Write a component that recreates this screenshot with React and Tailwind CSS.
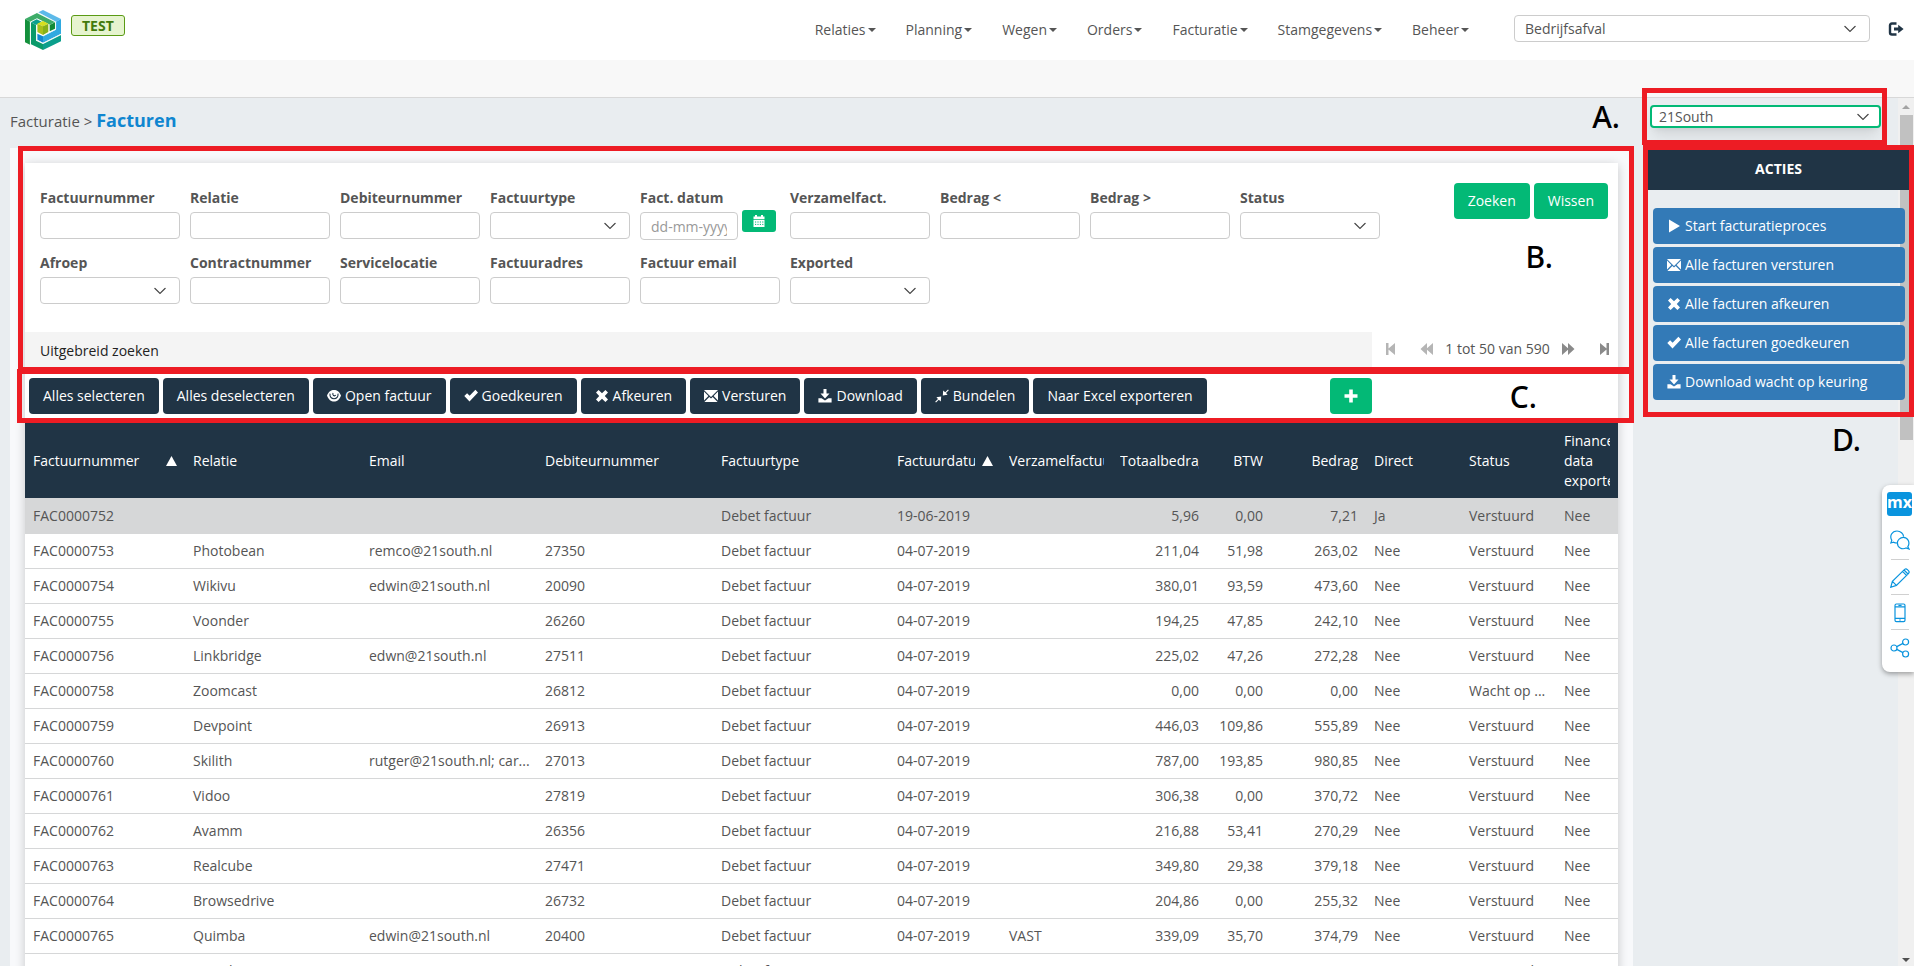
import React, { useState } from 'react';

const menuItems = ['Relaties', 'Planning', 'Wegen', 'Orders', 'Facturatie', 'Stamgegevens', 'Beheer'];

const filters = [
  { id: 'factuurnummer', label: 'Factuurnummer', type: 'text' },
  { id: 'relatie', label: 'Relatie', type: 'text' },
  { id: 'debiteurnummer', label: 'Debiteurnummer', type: 'text' },
  { id: 'factuurtype', label: 'Factuurtype', type: 'select' },
  { id: 'factuurdatum', label: 'Fact. datum', type: 'date' },
  { id: 'verzamelfactuur', label: 'Verzamelfact.', type: 'text' },
  { id: 'bedrag-max', label: 'Bedrag <', type: 'text' },
  { id: 'bedrag-min', label: 'Bedrag >', type: 'text' },
  { id: 'status', label: 'Status', type: 'select' },
  { id: 'afroep', label: 'Afroep', type: 'select' },
  { id: 'contractnummer', label: 'Contractnummer', type: 'text' },
  { id: 'servicelocatie', label: 'Servicelocatie', type: 'text' },
  { id: 'factuuradres', label: 'Factuuradres', type: 'text' },
  { id: 'factuur-email', label: 'Factuur email', type: 'text' },
  { id: 'exported', label: 'Exported', type: 'select' },
];

const toolbar = [
  { label: 'Alles selecteren' },
  { label: 'Alles deselecteren' },
  { label: 'Open factuur', icon: 'eye' },
  { label: 'Goedkeuren', icon: 'ok' },
  { label: 'Afkeuren', icon: 'remove' },
  { label: 'Versturen', icon: 'envelope' },
  { label: 'Download', icon: 'download' },
  { label: 'Bundelen', icon: 'resize' },
  { label: 'Naar Excel exporteren' },
];

const actions = [
  { label: 'Start facturatieproces', icon: 'play' },
  { label: 'Alle facturen versturen', icon: 'envelope' },
  { label: 'Alle facturen afkeuren', icon: 'remove' },
  { label: 'Alle facturen goedkeuren', icon: 'ok' },
  { label: 'Download wacht op keuring', icon: 'download' },
];

const columns = [
  { key: 'nummer', label: 'Factuurnummer', width: 'w-[160px]', sorted: true },
  { key: 'relatie', label: 'Relatie', width: 'w-[176px]' },
  { key: 'email', label: 'Email', width: 'w-[176px]' },
  { key: 'debiteur', label: 'Debiteurnummer', width: 'w-[176px]' },
  { key: 'type', label: 'Factuurtype', width: 'w-[176px]' },
  { key: 'datum', label: 'Factuurdatum', width: 'w-[112px]', sorted: true },
  { key: 'verzamel', label: 'Verzamelfactuur', width: 'w-[111px]' },
  { key: 'totaal', label: 'Totaalbedrag', width: 'w-[95px]', right: true },
  { key: 'btw', label: 'BTW', width: 'w-[64px]', right: true },
  { key: 'bedrag', label: 'Bedrag', width: 'w-[95px]', right: true },
  { key: 'direct', label: 'Direct', width: 'w-[95px]' },
  { key: 'status', label: 'Status', width: 'w-[95px]' },
  { key: 'exported', label: 'Finance data exported', width: 'w-[62px]' },
];

const invoice = (nummer, relatie, email, debiteur, totaal, btw, bedrag, extra = {}) => ({
  nummer,
  relatie,
  email,
  debiteur,
  type: 'Debet factuur',
  datum: '04-07-2019',
  verzamel: '',
  totaal,
  btw,
  bedrag,
  direct: 'Nee',
  status: 'Verstuurd',
  exported: 'Nee',
  ...extra,
});

const invoices = [
  invoice('FAC0000752', '', '', '', '5,96', '0,00', '7,21', { datum: '19-06-2019', direct: 'Ja' }),
  invoice('FAC0000753', 'Photobean', 'remco@21south.nl', '27350', '211,04', '51,98', '263,02'),
  invoice('FAC0000754', 'Wikivu', 'edwin@21south.nl', '20090', '380,01', '93,59', '473,60'),
  invoice('FAC0000755', 'Voonder', '', '26260', '194,25', '47,85', '242,10'),
  invoice('FAC0000756', 'Linkbridge', 'edwn@21south.nl', '27511', '225,02', '47,26', '272,28'),
  invoice('FAC0000758', 'Zoomcast', '', '26812', '0,00', '0,00', '0,00', { status: 'Wacht op ...' }),
  invoice('FAC0000759', 'Devpoint', '', '26913', '446,03', '109,86', '555,89'),
  invoice('FAC0000760', 'Skilith', 'rutger@21south.nl; car...', '27013', '787,00', '193,85', '980,85'),
  invoice('FAC0000761', 'Vidoo', '', '27819', '306,38', '0,00', '370,72'),
  invoice('FAC0000762', 'Avamm', '', '26356', '216,88', '53,41', '270,29'),
  invoice('FAC0000763', 'Realcube', '', '27471', '349,80', '29,38', '379,18'),
  invoice('FAC0000764', 'Browsedrive', '', '26732', '204,86', '0,00', '255,32'),
  invoice('FAC0000765', 'Quimba', 'edwin@21south.nl', '20400', '339,09', '35,70', '374,79', { verzamel: 'VAST' }),
  invoice('FAC0000766', 'Quimba', '', '20400', '120,00', '25,20', '145,20'),
];

const iconPaths = {
  play: 'M2 0.5 L13 7 L2 13.5 Z',
  ok: 'M14 3.4 L11.4 0.8 L5.6 6.8 L3.1 4.3 L0.3 7 L5.5 12.4 Z',
  remove: 'M3.6 1 L7 4.2 L10.4 1 L13 3.6 L9.8 7 L13 10.4 L10.4 13 L7 9.8 L3.6 13 L1 10.4 L4.2 7 L1 3.6 Z',
  envelope: 'M0 1 H14 L7 8 Z M0 2.4 L4.4 7 L0 11.6 Z M14 2.4 L9.6 7 L14 11.6 Z M0.4 13 L5.3 7.9 L7 9.6 L8.7 7.9 L13.6 13 Z',
  download: 'M5.5 0 H8.5 V4.5 H11.5 L7 9.4 L2.5 4.5 H5.5 Z M0.4 9.2 H3.6 L7 11.4 L10.4 9.2 H13.6 V13.6 H0.4 Z',
  resize: 'M13 0.4 L13.8 1.2 L11 4 L12.6 5.8 L7.8 6.4 L8.2 1.6 L10.2 3.2 Z M1 13.6 L0.2 12.8 L3 10 L1.4 8.2 L6.2 7.6 L5.8 12.4 L3.8 10.8 Z',
  plus: 'M5.2 0.5 H8.8 V5.2 H13.5 V8.8 H8.8 V13.5 H5.2 V8.8 H0.5 V5.2 H5.2 Z',
  stepBackward: 'M2 1 H4.5 V6.4 L11 1 V13 L4.5 7.6 V13 H2 Z',
  stepForward: 'M12 1 H9.5 V6.4 L3 1 V13 L9.5 7.6 V13 H12 Z',
  backward: 'M0.5 7 L7 1 V6.2 L13 1 V13 L7 7.8 V13 Z',
  forward: 'M13.5 7 L7 1 V6.2 L1 1 V13 L7 7.8 V13 Z',
};

const Icon = ({ name, className = 'w-[14px] h-[14px]' }) => {
  if (name === 'eye') {
    return (
      <svg viewBox="0 0 14 14" className={className} aria-hidden="true">
        <path d="M0 6.6 C1.6 2.4 4 1 7 1 C10 1 12.4 2.4 14 6.6 C12.4 11 10 12.6 7 12.6 C4 12.6 1.6 11 0 6.6 Z" fill="currentColor" />
        <path d="M3 4.6 C2.6 8 4.4 9.8 7 9.8 C9.6 9.8 11.4 8 11 4.6" fill="none" stroke="#203445" strokeWidth="1.1" />
        <path d="M6 4 C5.2 6.4 7.2 7.6 8.8 6.2" fill="none" stroke="#203445" strokeWidth="1.1" />
      </svg>
    );
  }
  return (
    <svg viewBox="0 0 14 14" className={className} aria-hidden="true">
      <path d={iconPaths[name]} fill="currentColor" />
    </svg>
  );
};

const CalendarIcon = () => (
  <svg viewBox="0 0 12 12" className="w-3 h-3" aria-hidden="true">
    <path d="M0.5 1.4 H2 V0 H4 V1.4 H8 V0 H10 V1.4 H11.5 V4 H0.5 Z M0.5 4.8 H11.5 V12 H0.5 Z" fill="currentColor" />
    <path d="M2 7 H10.4 M2 9.4 H10.4" stroke="#03b976" strokeWidth="1" strokeDasharray="1.2 1.2" />
  </svg>
);

const LogoutIcon = () => (
  <svg viewBox="0 0 16 14" className="w-4 h-[14px]" aria-hidden="true">
    <path d="M8.5 1.5 H4 Q2 1.5 2 3.5 V10.5 Q2 12.5 4 12.5 H8.5" fill="none" stroke="currentColor" strokeWidth="2.4" />
    <path d="M6 5.4 H10.2 V2.8 L15.6 7 L10.2 11.2 V8.6 H6 Z" fill="currentColor" />
  </svg>
);

const Logo = () => (
  <svg viewBox="0 0 108 120" className="w-9 h-10" role="img" aria-label="Logo">
    <polygon points="40,7 54,0 108,27 93,35" fill="#5cb9e9" />
    <polygon points="108,27 108,71 54,98 54,79 93,59 93,35" fill="#2fa9e0" />
    <polygon points="37,71 54,79 54,98 37,89" fill="#1288cf" />
    <polygon points="0,27 36,9 90,36 75,44 36,25 15,35" fill="#3dac68" />
    <polygon points="0,27 15,35 15,104 0,97" fill="#14903c" />
    <polygon points="90,37 90,56 74,64 74,45" fill="#128a36" />
    <polygon points="18,37 33,45 33,92 54,102 54,120 18,103" fill="#0a9a6a" />
    <polygon points="18,37 35,28 50,35 33,45" fill="#0c9f8f" />
    <polygon points="108,75 108,94 54,120 54,102" fill="#0a9f8c" />
    <polygon points="37,41 54,33 70,41 54,49" fill="#d5df20" />
    <polygon points="37,41 54,49 54,75 37,66" fill="#a9c01c" />
    <polygon points="70,41 70,66 54,75 54,49" fill="#87b018" />
    <path d="M16 36 V104 M35 47 V90 L54 100 L108 73 M37 8 L92 36 V58 L54 78" fill="none" stroke="#e8f6f0" strokeWidth="2" />
  </svg>
);

const Chevron = ({ className }) => (
  <svg viewBox="0 0 12 7" className={className} aria-hidden="true">
    <path d="M0.5 0.5 L6 6 L11.5 0.5" fill="none" stroke="#444" strokeWidth="1.1" />
  </svg>
);

const Select = ({ id, options = [''], label, active }) => (
  <div className="relative w-full">
    <select
      id={id}
      aria-label={label}
      className={
        active
          ? 'block w-full h-[23px] px-[7px] appearance-none bg-white border-2 border-[#03b976] rounded text-[#555] shadow-lg outline-none'
          : 'block w-full h-[27px] px-[10px] appearance-none bg-white border border-[#ccc] rounded text-[#555]'
      }
    >
      {options.map((option) => (
        <option key={option}>{option}</option>
      ))}
    </select>
    <Chevron
      className={`absolute top-1/2 -translate-y-1/2 w-3 h-[7px] pointer-events-none ${active ? 'right-3' : 'right-[14px]'}`}
    />
  </div>
);

const Filter = ({ filter }) => (
  <div>
    <label htmlFor={filter.id} className="block mb-1 font-bold text-[#555] whitespace-nowrap">
      {filter.label}
    </label>
    {filter.type === 'select' && <Select id={filter.id} />}
    {filter.type === 'text' && (
      <input id={filter.id} type="text" className="block w-full h-[27px] px-[10px] border border-[#ccc] rounded" />
    )}
    {filter.type === 'date' && (
      <div className="flex gap-1">
        <input
          id={filter.id}
          type="text"
          placeholder="dd-mm-yyyy"
          className="block w-[98px] h-7 px-[10px] border border-[#ccc] rounded placeholder:text-[#999]"
        />
        <button
          type="button"
          aria-label="Kies datum"
          className="flex items-center justify-center w-[34px] h-[22px] -mt-[2px] bg-[#03b976] text-white rounded-[3px]"
        >
          <CalendarIcon />
        </button>
      </div>
    )}
  </div>
);

const Header = () => (
  <header>
    <div className="flex items-center h-[60px] bg-white pl-[25px] pr-[10px]">
      <Logo />
      <span className="mb-[9px] ml-[10px] px-[10px] h-[21px] leading-[19px] bg-[#e6f4cf] border border-[#5a9a14] rounded-[3px] text-[#437a0c] font-bold">
        TEST
      </span>
      <nav className="flex gap-[30px] ml-auto mr-[45px]">
        {menuItems.map((item) => (
          <a key={item} href="#" className="flex items-center gap-[2px] text-[#555]">
            {item}
            <svg viewBox="0 0 8 4" className="w-2 h-1" aria-hidden="true">
              <path d="M0 0 H8 L4 4 Z" fill="currentColor" />
            </svg>
          </a>
        ))}
      </nav>
      <div className="w-[356px] mb-[3px]">
        <Select id="afdeling" label="Afdeling" options={['Bedrijfsafval']} />
      </div>
      <button type="button" aria-label="Uitloggen" className="ml-[18px] mb-[3px] text-[#203445]">
        <LogoutIcon />
      </button>
    </div>
    <div className="h-[38px] bg-[#f8f8f8] border-b border-[#d8d8d8]" />
  </header>
);

const Pager = () => (
  <div className="flex items-center justify-between w-[246px] pl-3 pr-[7px] pb-1 text-[#555]">
    <button type="button" aria-label="Eerste pagina" className="text-[#b5b5b5]"><Icon name="stepBackward" /></button>
    <button type="button" aria-label="Vorige pagina" className="ml-[10px] text-[#b5b5b5]"><Icon name="backward" /></button>
    <span>1 tot 50 van 590</span>
    <button type="button" aria-label="Volgende pagina" className="mr-[10px] text-[#8a8a8a]"><Icon name="forward" /></button>
    <button type="button" aria-label="Laatste pagina" className="text-[#8a8a8a]"><Icon name="stepForward" /></button>
  </div>
);

const InvoiceTable = () => {
  const [selected, setSelected] = useState('FAC0000752');

  return (
    <table className="w-full table-fixed border-separate border-spacing-0">
      <thead>
        <tr className="h-[76px] bg-[#203445] text-white">
          {columns.map((col) => (
            <th
              key={col.key}
              className={`${col.width} px-2 font-normal border-b border-[#d6d7d8] ${col.right ? 'text-right' : 'text-left'}`}
            >
              <div className="flex items-center gap-[7px]">
                <span className="flex-1 min-w-0 overflow-hidden">{col.label}</span>
                {col.sorted && (
                  <svg viewBox="0 0 11 10" className="w-[11px] h-[10px] shrink-0" aria-hidden="true">
                    <path d="M5.5 0 L11 10 H0 Z" fill="currentColor" />
                  </svg>
                )}
              </div>
            </th>
          ))}
        </tr>
      </thead>
      <tbody>
        {invoices.map((row) => (
          <tr
            key={row.nummer}
            onClick={() => setSelected(row.nummer)}
            className={`h-[35px] text-[#555] ${row.nummer === selected ? 'bg-[#d6d7d8]' : 'bg-white'}`}
          >
            {columns.map((col) => (
              <td
                key={col.key}
                className={`border-b border-[#d6d7d8] whitespace-nowrap ${col.right ? 'px-2 text-right' : 'pl-2 text-left'}`}
              >
                {row[col.key]}
              </td>
            ))}
          </tr>
        ))}
      </tbody>
    </table>
  );
};

const Sidebar = () => (
  <aside className="relative z-10 w-[281px] shrink-0 pl-[10px]">
    <div className="h-[50px] pt-[7px] pl-[7px] pr-[33px]">
      <Select id="bedrijf" label="Bedrijf" options={['21South']} active />
    </div>
    <h2 className="h-[42px] leading-[42px] bg-[#203445] text-white text-center font-bold">ACTIES</h2>
    <div className="flex flex-col gap-[3px] pt-[18px] pl-[10px] pr-[9px]">
      {actions.map((action) => (
        <button
          key={action.label}
          type="button"
          className="flex items-center gap-1 h-9 px-[14px] bg-[#337ab7] text-white rounded"
        >
          <Icon name={action.icon} />
          {action.label}
        </button>
      ))}
    </div>
  </aside>
);

const Scrollbar = () => (
  <div className="absolute right-0 inset-y-0 w-4 flex flex-col items-center bg-[#f0f0f0]">
    <svg viewBox="0 0 8 4" className="w-2 h-1 mt-[7px] mb-[6px] shrink-0" aria-hidden="true">
      <path d="M4 0 L8 4 H0 Z" fill="#a3a3a3" />
    </svg>
    <div className="w-[13px] h-[325px] bg-[#c1c1c1]" />
    <svg viewBox="0 0 8 4" className="w-2 h-1 mt-auto mb-1 shrink-0" aria-hidden="true">
      <path d="M0 0 H8 L4 4 Z" fill="#505050" />
    </svg>
  </div>
);

const FeedbackWidget = () => {
  const tool = 'flex justify-center w-[18px] h-[35px] pt-2 border-t border-[#d0d0d0]';
  return (
    <div className="absolute right-0 top-[485px] z-20 w-8 h-[187px] pt-[7px] pl-[3px] flex flex-col items-center bg-white rounded-l-lg shadow-[0_2px_5px_rgba(0,0,0,0.35)]">
      <div className="w-[25px] h-6 leading-[21px] text-center rounded-[3px] bg-[#0a94de] text-white text-base font-bold">mx</div>
      <button type="button" aria-label="Feedback" className="flex justify-center w-[18px] h-[43px] pt-[14px]">
        <svg viewBox="0 0 20 20" className="w-5 h-5 shrink-0" fill="none" stroke="#0a94de" strokeWidth="1.2">
          <path d="M7.4 13 C5.8 13 4.6 12.8 3.6 12.2 L0.8 13 L1.8 10.4 C-0.8 6 2 1 7 1 C10.6 1 13.4 3.6 13.6 6.6" />
          <path d="M17.8 16.8 C20.4 12.8 18 7.4 13.4 7.4 C10 7.4 7.4 10 7.4 13 C7.4 17.6 12 20 16 18 L19 19 Z" />
        </svg>
      </button>
      <button type="button" aria-label="Bewerken" className={tool}>
        <svg viewBox="0 0 20 20" className="w-5 h-5 shrink-0" fill="none" stroke="#0a94de" strokeWidth="1.2">
          <path d="M0.8 19.2 L2.4 13.4 L14.6 1.4 Q16 0.2 17.4 1.6 L18.6 2.8 Q19.8 4.2 18.4 5.6 L6.4 17.4 Z M2.4 13.4 L6.4 17.4 M12.6 3.4 L16.4 7.4 M14 2 L18 6" />
        </svg>
      </button>
      <button type="button" aria-label="Mobiel" className={tool}>
        <svg viewBox="0 0 12 20" className="w-3 h-5 shrink-0" fill="none" stroke="#0a94de" strokeWidth="1.2">
          <rect x="1" y="1" width="10" height="17.6" rx="1.4" />
          <path d="M1 3.8 H11 M1 15.4 H11 M4.4 2.4 H7.6 M5.2 17 H6.8" />
        </svg>
      </button>
      <button type="button" aria-label="Delen" className={tool}>
        <svg viewBox="0 0 20 20" className="w-5 h-5 shrink-0" fill="none" stroke="#0a94de" strokeWidth="1.2">
          <circle cx="4" cy="10" r="3" />
          <circle cx="15.6" cy="4" r="3" />
          <circle cx="15.6" cy="16" r="3" />
          <path d="M6.8 8.6 L13 5.4 M6.8 11.4 L13 14.6" />
        </svg>
      </button>
    </div>
  );
};

// Lettered regions that the manual refers to
const Annotations = () => (
  <div className="absolute inset-0 z-30 pointer-events-none text-black text-[30px] leading-8 font-medium font-['Noto_Sans',sans-serif]">
    <div className="absolute right-[27px] top-[88px] w-[245px] h-[57px] border-5 border-[#ed1c24]" />
    <div className="absolute left-[18px] right-[280px] top-[146px] h-[226px] border-5 border-[#ed1c24]" />
    <div className="absolute left-[17px] right-[280px] top-[369px] h-[54px] border-5 border-[#ed1c24]" />
    <div className="absolute right-0 top-[145px] w-[271px] h-[272px] border-5 border-[#ed1c24]" />
    <span className="absolute right-[294px] top-[101px]">A.</span>
    <span className="absolute right-[361px] top-[241px]">B.</span>
    <span className="absolute right-[377px] top-[381px]">C.</span>
    <span className="absolute right-[53px] top-[424px]">D.</span>
  </div>
);

const App = () => {
  return (
    <div className="relative flex flex-col h-screen overflow-hidden bg-[#e9edf0] text-sm leading-5 font-['Open_Sans',sans-serif]">
      <Header />
      <div className="relative flex flex-1 min-h-0 overflow-hidden">
        <main className="flex-1 min-w-0">
          <div className="h-[50px] pl-[10px] pt-3 text-[15px] text-[#555]">
            Facturatie &gt; <h1 className="inline text-lg leading-5 font-bold text-[#0f86d0]">Facturen</h1>
          </div>
          <div className="ml-[10px] p-[15px] bg-[#f8f9fb]">
            <div className="bg-white shadow-[0_2px_10px_rgba(0,0,0,0.2)]">
              <div className="flex items-start pl-[15px] pr-[10px] pt-5 pb-7">
                <div className="flex-1 grid grid-cols-[repeat(auto-fill,140px)] gap-x-[10px] gap-y-[13px] pt-[5px]">
                  {filters.map((filter) => (
                    <Filter key={filter.id} filter={filter} />
                  ))}
                </div>
                <div className="flex gap-1">
                  <button type="button" className="h-9 px-[14px] bg-[#03b976] text-white rounded">Zoeken</button>
                  <button type="button" className="h-9 px-[14px] bg-[#03b976] text-white rounded">Wissen</button>
                </div>
              </div>
              <div className="flex h-[37px]">
                <div className="flex-1 flex items-center pl-[15px] bg-[#f4f4f4] text-[#222]">Uitgebreid zoeken</div>
                <Pager />
              </div>
              <div className="flex items-center h-[54px] pl-1 pr-[246px]">
                <div className="flex flex-1 gap-1">
                  {toolbar.map((item) => (
                    <button
                      key={item.label}
                      type="button"
                      className="flex items-center gap-1 h-9 px-[14px] bg-[#203445] text-white rounded whitespace-nowrap"
                    >
                      {item.icon && <Icon name={item.icon} />}
                      {item.label}
                    </button>
                  ))}
                </div>
                <button
                  type="button"
                  aria-label="Nieuwe factuur"
                  className="flex items-center justify-center w-[42px] h-9 bg-[#03b976] text-white rounded"
                >
                  <Icon name="plus" />
                </button>
              </div>
              <InvoiceTable />
            </div>
          </div>
        </main>
        <Sidebar />
        <Scrollbar />
      </div>
      <FeedbackWidget />
      <Annotations />
    </div>
  );
};

export default App;
